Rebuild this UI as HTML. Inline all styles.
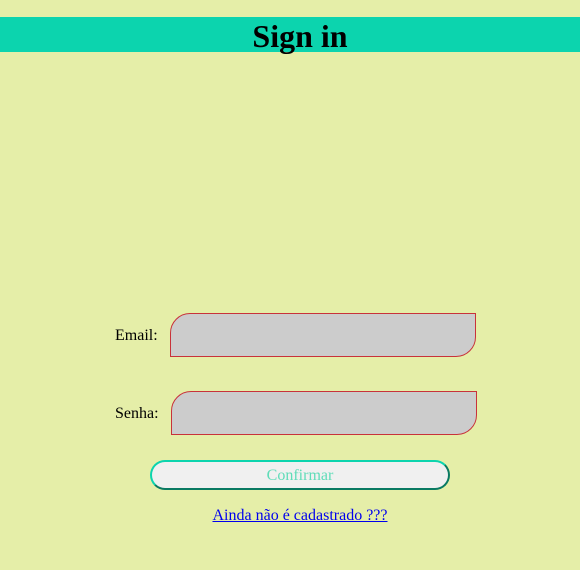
<!DOCTYPE html>
<html><head><meta charset="utf-8"><style>
body{margin:0;background:#e5eea8;font-family:"Liberation Serif",serif;width:580px;height:570px;position:relative;overflow:hidden}
h1{position:absolute;left:0;top:17px;width:580px;height:35px;margin:0;background:#0cd4ae;font-size:32px;line-height:38px;font-weight:bold;color:#000}
h1 span{position:absolute;left:0;width:600px;text-align:center}
.lbl{position:absolute;font-size:16px;color:#000}
.in{position:absolute;box-sizing:border-box;background:#cccccc;border:1px solid #c8323a;border-radius:20px 0 20px 0;height:44px;width:306px}
.btn{position:absolute;left:150px;top:460px;width:300px;height:30px;box-sizing:border-box;background:#f0f0f0;border:2px solid #0cd4ae;border-right-color:#0a7a62;border-bottom-color:#0a7a62;border-radius:15px;color:#5fdcb8;font-size:16px;text-align:center;line-height:28px}
a{position:absolute;left:0;width:600px;top:507px;text-align:center;color:#0000ee;font-size:16px;text-decoration:underline}
</style></head><body>
<h1><span>Sign in</span></h1>
<div class="lbl" style="left:115px;top:327px">Email:</div>
<div class="in" style="left:170px;top:313px"></div>
<div class="lbl" style="left:115px;top:405px">Senha:</div>
<div class="in" style="left:171px;top:391px"></div>
<div class="btn">Confirmar</div>
<a>Ainda não é cadastrado ???</a>
</body></html>
